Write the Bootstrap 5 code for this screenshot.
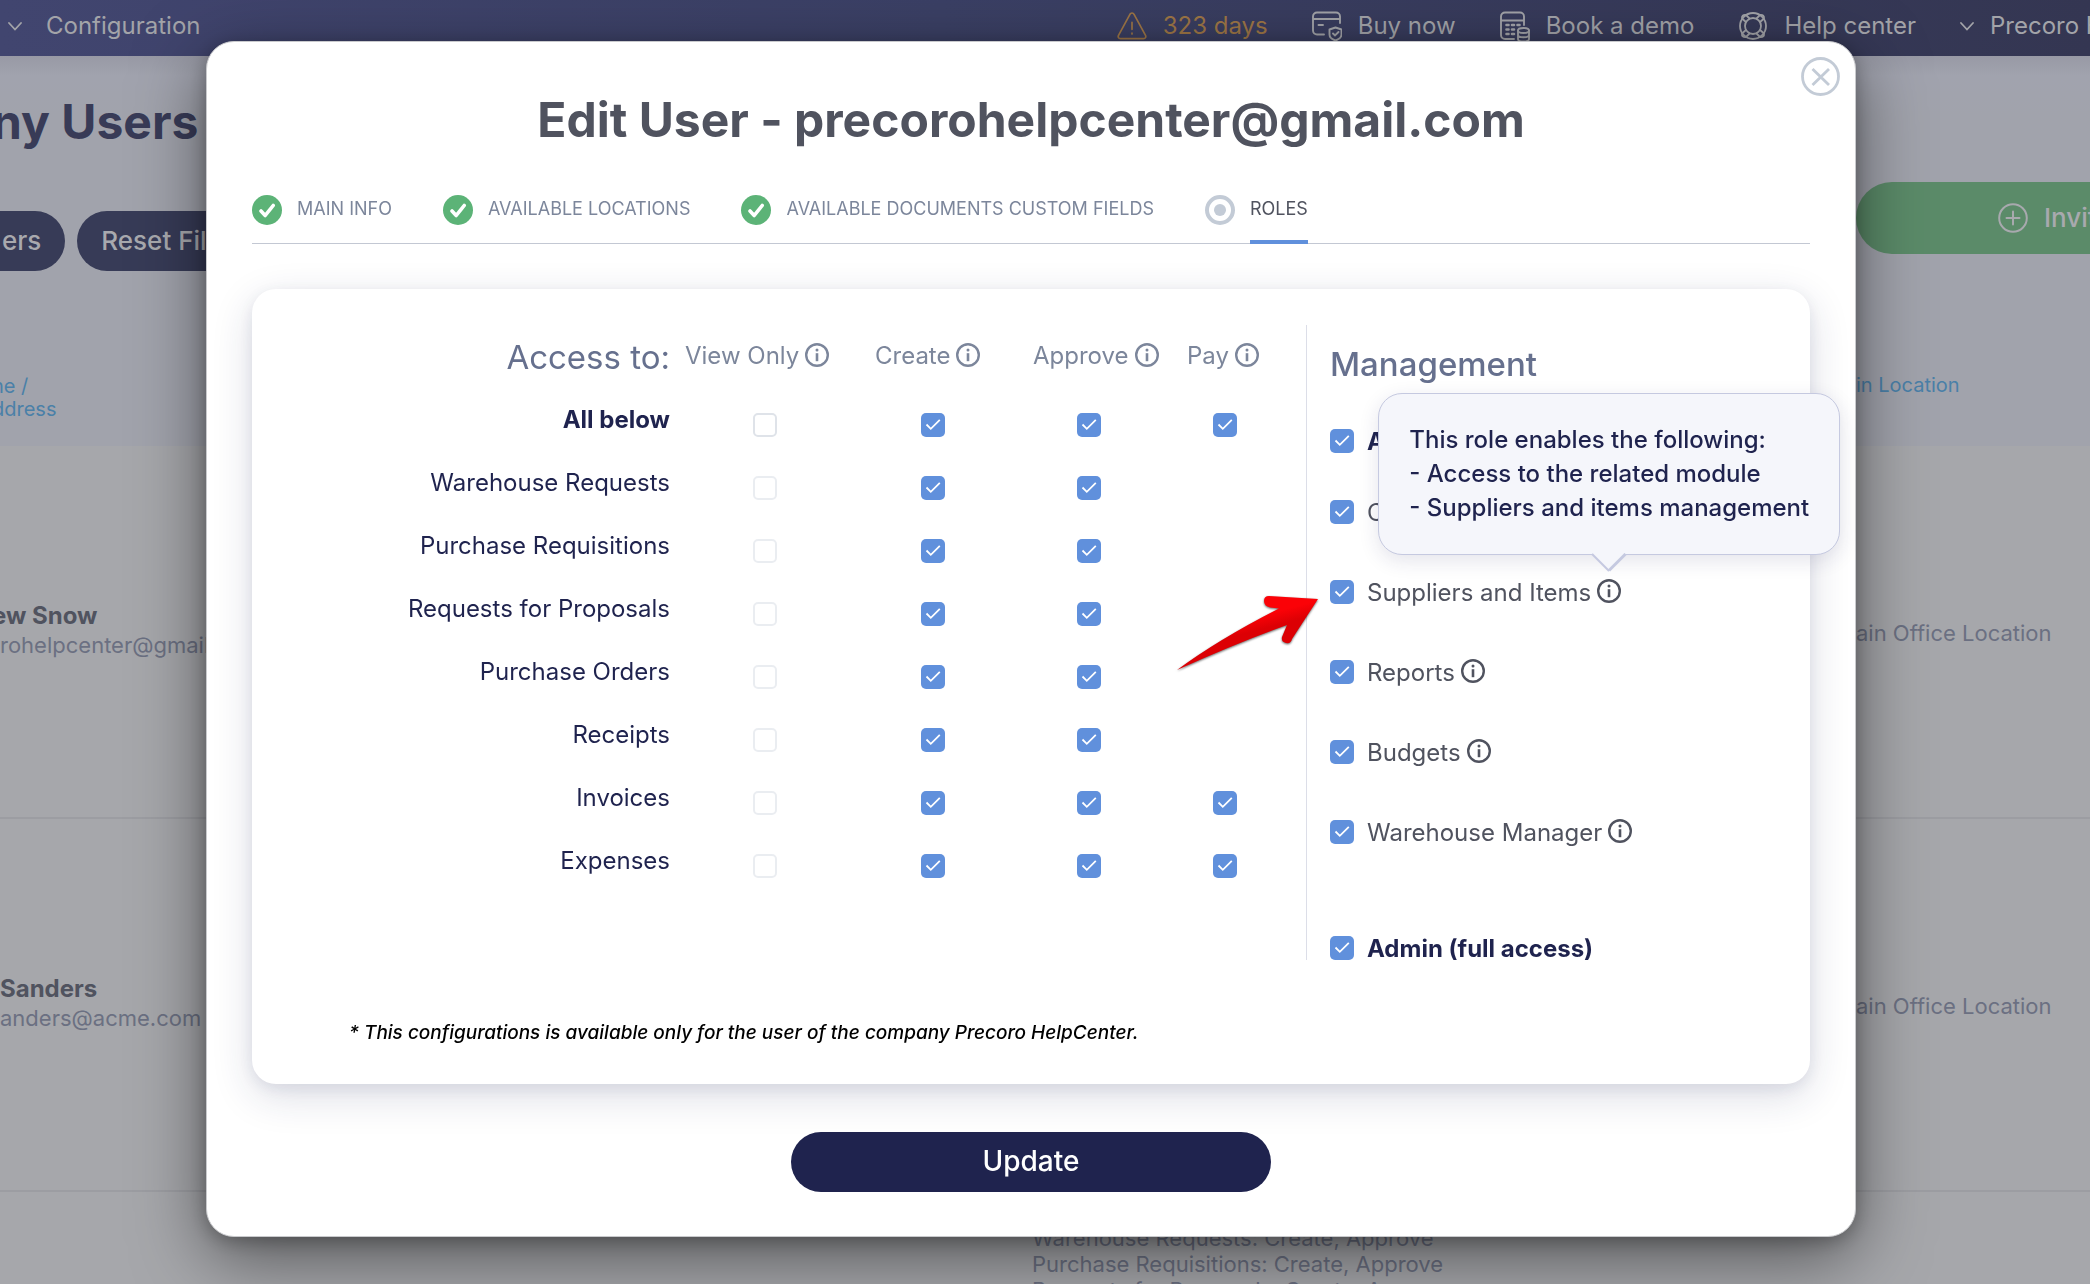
<!DOCTYPE html>
<html lang="en">
<head>
<meta charset="utf-8">
<meta name="viewport" content="width=device-width, initial-scale=1">
<title>Precoro – Edit User</title>
<link href="https://cdn.jsdelivr.net/npm/bootstrap@5.3.0/dist/css/bootstrap.min.css" rel="stylesheet">
<style>
  :root { --navy:#1f234e; --slate:#50535f; --steel:#7c869b; --blue:#6090dc; }
  body { font-family: Inter, "Liberation Sans", sans-serif; font-size: 24px; line-height: 32px; background:#a6a7ab; color: var(--slate); height: 100vh; overflow: hidden; }
  svg { flex: none; display: block; }
  a { text-decoration: none; color: inherit; }

  /* page behind the dialog */
  .topbar { height: 56px; background: linear-gradient(90deg,#41456f,#3b4065 45%,#343652 ); color:#a3a4a9; padding: 0 0 4px; white-space: nowrap; overflow: hidden; }
  .topbar .account { width: 100px; overflow: hidden; }
  .top-links { gap: 44px; }
  .alert-days { color:#9e7646; }
  .page-head { background: linear-gradient(#9899a5, #a1a3ae 20px, #a1a3ac 60px); height: 390px; overflow: hidden; white-space: nowrap; }
  .page-title { font-size: 48px; line-height: 60px; font-weight: 700; color:#383b57; margin: 36px 0 59px; }
  .bleed { margin-left: -8px; }
  .pill { height: 60px; border: 0; border-radius: 30px; background:#373b57; color:#a8a9ae; font-size: 26px; font-weight: 500; padding: 0 24px; }
  .pill-cut { border-radius: 0 30px 30px 0; padding-left: 2px; }
  .pill-invite { background:#5b8b69; height: 72px; width: 236px; border-radius: 36px 0 0 36px; margin-top: 126px; padding: 0 0 0 142px; overflow: hidden; gap: 16px; }
  .col-links { font-size: 20px; line-height: 23px; color:#4a80a8; }
  .side-right { width: 234px; flex: none; }
  .user-row { height: 373px; border-bottom: 2px solid #9c9da2; white-space: nowrap; }
  .user-row strong { line-height: 28px; display: block; }
  .user-mail { font-size: 22px; line-height: 30px; color:#6b7082; padding-bottom: 2px; }
  .user-roles { margin-left: 1032px; font-size: 22px; line-height: 26px; color:#6b7082; padding-top: 33px; white-space: nowrap; }
  .loc { color:#6b7082; font-size: 22px; padding-top: 2px; }

  /* dialog */
  .veil { position: fixed; inset: 0; padding: 41px 28px 0 0; }
  .dialog-box { position: relative; width: 100%; max-width: 1650px; background:#fff; border: 1px solid #c9cacd; border-radius: 28px; padding: 48px 45px 44px; box-shadow: 0 20px 70px rgba(0,0,0,.5), 0 4px 18px rgba(0,0,0,.25); }
  .close-x { position: absolute; top: 15px; right: 15px; border: 0; background: none; padding: 0; }
  .dialog-title { font-size: 48px; line-height: 60px; font-weight: 700; color: var(--slate); margin-bottom: 45px; }
  .steps { border-bottom: 1px solid #c3c8d3; gap: 51px; margin-bottom: 45px; }
  .steps li { gap: 15px; }
  .steps a { font-size: 18px; line-height: 28px; padding-bottom: 17px; border-bottom: 4px solid transparent; margin-bottom: -1px; color: var(--steel); }
  .steps a.current { color: var(--slate); border-color: var(--blue); }
  .panel { border-radius: 24px; background:#fff; padding: 36px 0; box-shadow: 0 12px 40px rgba(31,35,90,.16), 0 4px 14px rgba(31,35,90,.08); }
  .access { border-right: 1px solid #dcdee8; padding-right: 21px; height: 635px; }
  .access table { width: 100%; table-layout: fixed; }
  .access th, .access td { padding: 0; height: 63px; text-align: center; vertical-align: middle; }
  .access thead th { height: 68px; font-weight: 400; color: var(--steel); white-space: nowrap; padding: 0 0 6px 22px; text-align: left; }
  .access thead th.first-mode { padding-left: 8px; }
  .access thead th.third-mode { padding-left: 20px; }
  .access thead th.corner { font-size: 33px; color:#66708e; text-align: right; padding: 0 7px 5px 0; }
  .access tbody th { text-align: right; font-weight: 400; color: var(--navy); padding: 0 7px 9px 0; }
  .access tbody tr:first-child th { font-weight: 700; }
  .c-view { width: 176px; } .c-create { width: 160px; } .c-approve { width: 152px; } .c-pay { width: 120px; }
  .tick.form-check-input { width: 24px; height: 24px; margin: 0; display: block; float: none; border: 2px solid #dfe3e9; border-radius: 5px; flex: none; }
  .tick.form-check-input:disabled { border-color:#e6e9ee; opacity: .8; }
  td .tick.form-check-input { margin: 0 auto; }
  .tick.form-check-input:checked { border: 0; background-color: var(--blue); background-size: 24px 24px; background-image: url("data:image/svg+xml,%3csvg xmlns='http://www.w3.org/2000/svg' viewBox='0 0 24 24'%3e%3cpath fill='none' stroke='%23fff' stroke-width='1.8' d='M5.5 11.5l4.3 4.3 9-9'/%3e%3c/svg%3e"); }
  .info { border: 0; background: none; padding: 0 0 2px; color: inherit; position: relative; }
  .info-gap { gap: 6px; }
  .manage { width: 503px; flex: none; padding-left: 23px; }
  .manage h2 { font-size: 33px; line-height: 40px; font-weight: 500; color:#66708e; margin: 19px 0 26px; }
  .manage li { height: 80px; position: relative; white-space: nowrap; }
  .manage li.lead-item { height: 62px; }
  .manage li.admin-item { height: 24px; margin-top: 64px; }
  .manage .strong { font-weight: 700; color: var(--navy); }
  .manage label { padding-top: 2px; }
  .tick-gap { gap: 13px; }
  .tip { position: absolute; bottom: 50px; left: 50%; transform: translateX(-50%); z-index: 5; background:#f5f6fb; border: 1px solid #c5c9e0; border-radius: 24px; padding: 29px 30px; font-weight: 500; line-height: 34px; color: var(--navy); text-align: left; white-space: nowrap; box-shadow: 0 6px 20px rgba(31,35,90,.12); }
  .tip svg { position: absolute; top: 100%; left: 50%; transform: translateX(-50%); margin-top: -1px; }
  .pointer { position: absolute; left: -161px; top: 37px; filter: drop-shadow(0 1px 1px rgba(0,0,0,.6)); }
  .note { font-size: 19px; line-height: 30px; font-style: italic; font-weight: 500; color:#000; margin: 58px 0 0 97px; }
  .update { display: block; width: 480px; height: 60px; border: 0; border-radius: 30px; background: var(--navy); color:#fff; font-size: 28px; font-weight: 500; margin: 48px auto 0; padding: 0 0 3px; }
</style>
</head>
<body>
<svg width="0" height="0" class="position-absolute" aria-hidden="true">
  <symbol id="i-info" viewBox="0 0 24 24"><circle cx="12" cy="12" r="10.8" fill="none" stroke="currentColor" stroke-width="2.4"/><circle cx="12" cy="7" r="1.5" fill="currentColor"/><path d="M12 10.200v8" stroke="currentColor" stroke-width="2.600"/></symbol>
  <symbol id="i-done" viewBox="0 0 30 30"><circle cx="15" cy="15" r="15" fill="#5cb377"/><path d="M9 16l4.200 4.500 8-10" fill="none" stroke="#fff" stroke-width="3.600" stroke-linecap="round" stroke-linejoin="round"/></symbol>
  <symbol id="i-chev" viewBox="0 0 14 9"><path d="M1 1l6 6.500L13 1" fill="none" stroke="currentColor" stroke-width="1.800" stroke-linecap="round"/></symbol>
</svg>

<nav class="topbar d-flex align-items-center">
  <a href="#" class="d-flex align-items-center ps-2"><svg width="14" height="9"><use href="#i-chev"/></svg><span class="ms-4">Configuration</span></a>
  <div class="top-links d-flex ms-auto align-items-center">
    <a href="#" class="alert-days d-flex align-items-center">
      <svg class="me-3" width="30" height="30" viewBox="0 0 32 30" fill="none" stroke="currentColor" stroke-width="1.800" stroke-linecap="round" stroke-linejoin="round"><path d="M13.800 2.500L1.600 25c-.9 1.900.2 3.500 2 3.500h24.800c1.800 0 2.900-1.600 2-3.500L18.200 2.500c-1-1.800-3.400-1.800-4.400 0zM16 11v7.500M16 22.500v1"/></svg>323 days</a>
    <a href="#" class="d-flex align-items-center">
      <svg class="me-3" width="30" height="30" viewBox="0 0 30 30" fill="none" stroke="currentColor" stroke-width="1.900" stroke-linecap="round"><path d="M12 23.500H5a4 4 0 0 1-4-4V5.500a4 4 0 0 1 4-4h19a4 4 0 0 1 4 4V12M1 8h27M6.500 14H11"/><path d="M23.500 16.500l6 2v5c0 3-3 5-6 6-3-1-6-3-6-6v-5z" stroke-linejoin="round"/><path d="M21 22.500l2 2 3.500-3.500"/></svg>Buy now</a>
    <a href="#" class="d-flex align-items-center">
      <svg class="me-3" width="30" height="30" viewBox="0 0 30 30" fill="none" stroke="currentColor" stroke-width="1.900" stroke-linecap="round"><path d="M14 28H5a4 4 0 0 1-4-4V5.500a4 4 0 0 1 4-4h15a4 4 0 0 1 4 4V14M1 9.500h23"/><path d="M6.500 14h2M12 14h2M17.500 14h2M6.500 18.500h2M12 18.500h2M6.500 23h2M12 23h2" stroke-width="2.600"/><ellipse cx="23.500" cy="19.500" rx="5.500" ry="2.500"/><path d="M18 19.500V28c0 1.500 2.500 2.500 5.500 2.500S29 29.500 29 28v-8.500M18 24c0 1.500 2.500 2.300 5.500 2.300S29 25.500 29 24"/></svg>Book a demo</a>
    <a href="#" class="d-flex align-items-center">
      <svg class="me-3" width="30" height="30" viewBox="0 0 30 30" fill="none" stroke="currentColor" stroke-width="1.800" stroke-linejoin="round"><circle cx="15" cy="15" r="13"/><circle cx="15" cy="15" r="8"/><path d="M8.500 11.500L4 7.500Q3.500 3.500 8 4l4 4M21.500 11.500L26 7.500Q26.500 3.500 22 4l-4 4M8.500 18.500L4 22.500Q3.500 26.500 8 26l4-4M21.500 18.500L26 22.500Q26.500 26.500 22 26l-4-4"/></svg>Help center</a>
    <span class="d-flex align-items-center gap-3"><svg width="14" height="9"><use href="#i-chev"/></svg>
    <a href="#" class="account">Precoro HelpCenter</a></span>
  </div>
</nav>

<main>
  <header class="page-head d-flex justify-content-between">
    <div>
      <h1 class="page-title bleed">ny Users</h1>
      <div class="d-flex gap-2">
        <button type="button" class="pill pill-cut me-1">ers</button>
        <button type="button" class="pill">Reset Filters</button>
      </div>
      <div class="col-links bleed mt-5 pt-5"><div class="mt-2"><a href="#">ne /<br>ddress</a></div></div>
    </div>
    <div class="side-right">
      <button type="button" class="pill pill-invite d-flex align-items-center"><svg width="30" height="30" viewBox="0 0 30 30" fill="none" stroke="currentColor" stroke-width="2" stroke-linecap="round"><circle cx="15" cy="15" r="13.800"/><path d="M15 8.500v13M8.500 15h13"/></svg>Invite User</button>
      <div class="col-links mt-5 pt-5"><div class="mt-4"><a href="#">in Location</a></div></div>
    </div>
  </header>
  <section class="user-row d-flex justify-content-between align-items-center">
    <div><strong class="bleed">ew Snow</strong><div class="user-mail">rohelpcenter@gmail.com</div></div>
    <div class="side-right loc">ain Office Location</div>
  </section>
  <section class="user-row d-flex justify-content-between align-items-center">
    <div><strong>Sanders</strong><div class="user-mail">anders@acme.com</div></div>
    <div class="side-right loc">ain Office Location</div>
  </section>
  <section>
    <div class="user-roles">Warehouse Requests: Create, Approve<br>Purchase Requisitions: Create, Approve<br>Requests for Proposals: Create, Approve</div>
  </section>
</main>

<div class="veil d-flex justify-content-center align-items-start">
  <form class="dialog-box" role="dialog" aria-labelledby="dlgTitle">
    <button type="button" class="close-x" aria-label="Close"><svg width="39" height="39" viewBox="0 0 39 39" fill="none" stroke="#c3cbd6" stroke-width="2.800"><circle cx="19.500" cy="19.500" r="18"/><path d="M11.500 12l16.500 16M28 12L11.500 28"/></svg></button>
    <h1 class="dialog-title text-center" id="dlgTitle">Edit User - precorohelpcenter@gmail.com</h1>

    <ul class="steps list-unstyled d-flex">
      <li class="d-flex"><svg width="30" height="30"><use href="#i-done"/></svg><a href="#">MAIN INFO</a></li>
      <li class="d-flex"><svg width="30" height="30"><use href="#i-done"/></svg><a href="#">AVAILABLE LOCATIONS</a></li>
      <li class="d-flex"><svg width="30" height="30"><use href="#i-done"/></svg><a href="#">AVAILABLE DOCUMENTS CUSTOM FIELDS</a></li>
      <li class="d-flex"><svg width="30" height="30" viewBox="0 0 30 30"><circle cx="15" cy="15" r="13" fill="none" stroke="#c3cbd6" stroke-width="4"/><circle cx="15" cy="15" r="6" fill="#c3cbd6"/></svg><a href="#" class="current">ROLES</a></li>
    </ul>

    <div class="panel">
      <div class="d-flex">
        <div class="access flex-grow-1">
          <table>
            <colgroup><col><col class="c-view"><col class="c-create"><col class="c-approve"><col class="c-pay"></colgroup>
            <thead><tr>
              <th class="corner">Access to:</th>
              <th class="first-mode"><span class="d-flex info-gap">View Only <button type="button" class="info" aria-label="About View Only"><svg width="24" height="24"><use href="#i-info"/></svg></button></span></th>
              <th><span class="d-flex info-gap">Create <button type="button" class="info" aria-label="About Create"><svg width="24" height="24"><use href="#i-info"/></svg></button></span></th>
              <th class="third-mode"><span class="d-flex info-gap">Approve <button type="button" class="info" aria-label="About Approve"><svg width="24" height="24"><use href="#i-info"/></svg></button></span></th>
              <th><span class="d-flex info-gap">Pay <button type="button" class="info" aria-label="About Pay"><svg width="24" height="24"><use href="#i-info"/></svg></button></span></th>
            </tr></thead>
            <tbody>
              <tr><th>All below</th><td><input class="tick form-check-input" type="checkbox" aria-label="All below: view only"></td><td><input class="tick form-check-input" type="checkbox" checked aria-label="All below: create"></td><td><input class="tick form-check-input" type="checkbox" checked aria-label="All below: approve"></td><td><input class="tick form-check-input" type="checkbox" checked aria-label="All below: pay"></td></tr>
              <tr><th>Warehouse Requests</th><td><input class="tick form-check-input" type="checkbox" disabled aria-label="Warehouse Requests: view only"></td><td><input class="tick form-check-input" type="checkbox" checked aria-label="Warehouse Requests: create"></td><td><input class="tick form-check-input" type="checkbox" checked aria-label="Warehouse Requests: approve"></td><td></td></tr>
              <tr><th>Purchase Requisitions</th><td><input class="tick form-check-input" type="checkbox" disabled aria-label="Purchase Requisitions: view only"></td><td><input class="tick form-check-input" type="checkbox" checked aria-label="Purchase Requisitions: create"></td><td><input class="tick form-check-input" type="checkbox" checked aria-label="Purchase Requisitions: approve"></td><td></td></tr>
              <tr><th>Requests for Proposals</th><td><input class="tick form-check-input" type="checkbox" disabled aria-label="Requests for Proposals: view only"></td><td><input class="tick form-check-input" type="checkbox" checked aria-label="Requests for Proposals: create"></td><td><input class="tick form-check-input" type="checkbox" checked aria-label="Requests for Proposals: approve"></td><td></td></tr>
              <tr><th>Purchase Orders</th><td><input class="tick form-check-input" type="checkbox" disabled aria-label="Purchase Orders: view only"></td><td><input class="tick form-check-input" type="checkbox" checked aria-label="Purchase Orders: create"></td><td><input class="tick form-check-input" type="checkbox" checked aria-label="Purchase Orders: approve"></td><td></td></tr>
              <tr><th>Receipts</th><td><input class="tick form-check-input" type="checkbox" disabled aria-label="Receipts: view only"></td><td><input class="tick form-check-input" type="checkbox" checked aria-label="Receipts: create"></td><td><input class="tick form-check-input" type="checkbox" checked aria-label="Receipts: approve"></td><td></td></tr>
              <tr><th>Invoices</th><td><input class="tick form-check-input" type="checkbox" disabled aria-label="Invoices: view only"></td><td><input class="tick form-check-input" type="checkbox" checked aria-label="Invoices: create"></td><td><input class="tick form-check-input" type="checkbox" checked aria-label="Invoices: approve"></td><td><input class="tick form-check-input" type="checkbox" checked aria-label="Invoices: pay"></td></tr>
              <tr><th>Expenses</th><td><input class="tick form-check-input" type="checkbox" disabled aria-label="Expenses: view only"></td><td><input class="tick form-check-input" type="checkbox" checked aria-label="Expenses: create"></td><td><input class="tick form-check-input" type="checkbox" checked aria-label="Expenses: approve"></td><td><input class="tick form-check-input" type="checkbox" checked aria-label="Expenses: pay"></td></tr>
            </tbody>
          </table>
        </div>

        <div class="manage">
          <h2>Management</h2>
          <ul class="list-unstyled mb-0">
            <li class="lead-item d-flex align-items-center tick-gap"><input class="tick form-check-input" type="checkbox" checked id="mAll"><label for="mAll" class="strong">All below</label></li>
            <li class="d-flex align-items-center tick-gap"><input class="tick form-check-input" type="checkbox" checked id="mConf"><label for="mConf">Configuration</label></li>
            <li class="d-flex align-items-center tick-gap"><input class="tick form-check-input" type="checkbox" checked id="mSup">
              <span class="d-flex align-items-center info-gap"><label for="mSup">Suppliers and Items</label>
                <button type="button" class="info" aria-label="About Suppliers and Items"><svg width="24" height="24"><use href="#i-info"/></svg>
                  <span class="tip" role="tooltip">This role enables the following:<br>- Access to the related module<br>- Suppliers and items management
                    <svg width="36" height="19" viewBox="0 0 36 19"><path d="M0 0h36L18 18z" fill="#f5f6fb"/><path d="M1 1l17 17" stroke="#c5c9e0" stroke-width="2"/><path d="M18 17.500L34.500 1" stroke="#c5c9e0" stroke-width="3"/></svg>
                  </span></button></span>
              <svg class="pointer" width="156" height="90" viewBox="0 0 156 90" aria-hidden="true"><defs><linearGradient id="redShade" x1="0" y1="0" x2=".5" y2="1"><stop offset=".45" stop-color="#fb0207"/><stop offset=".6" stop-color="#dc0004"/></linearGradient></defs><path d="M149 10L100 7q-5 0-5 5t6 6.500l9 1Q50 50 8 81q60-27 110-45l-5 12q-1 5 4 6t6-4z" fill="url(#redShade)"/></svg>
            </li>
            <li class="d-flex align-items-center tick-gap"><input class="tick form-check-input" type="checkbox" checked id="mRep"><span class="d-flex align-items-center info-gap"><label for="mRep">Reports</label><button type="button" class="info" aria-label="About Reports"><svg width="24" height="24"><use href="#i-info"/></svg></button></span></li>
            <li class="d-flex align-items-center tick-gap"><input class="tick form-check-input" type="checkbox" checked id="mBud"><span class="d-flex align-items-center info-gap"><label for="mBud">Budgets</label><button type="button" class="info" aria-label="About Budgets"><svg width="24" height="24"><use href="#i-info"/></svg></button></span></li>
            <li class="d-flex align-items-center tick-gap"><input class="tick form-check-input" type="checkbox" checked id="mWar"><span class="d-flex align-items-center info-gap"><label for="mWar">Warehouse Manager</label><button type="button" class="info" aria-label="About Warehouse Manager"><svg width="24" height="24"><use href="#i-info"/></svg></button></span></li>
            <li class="admin-item d-flex align-items-center tick-gap"><input class="tick form-check-input" type="checkbox" checked id="mAdm"><label for="mAdm" class="strong">Admin (full access)</label></li>
          </ul>
        </div>
      </div>
      <p class="note">* This configurations is available only for the user of the company Precoro HelpCenter.</p>
    </div>
    <button type="submit" class="update">Update</button>
  </form>
</div>
<script src="https://cdn.jsdelivr.net/npm/bootstrap@5.3.0/dist/js/bootstrap.bundle.min.js"></script>
</body>
</html>
